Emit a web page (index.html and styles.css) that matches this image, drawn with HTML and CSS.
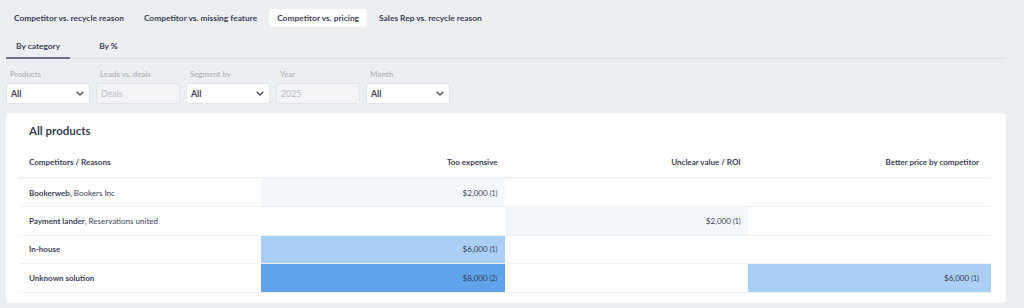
FILE: index.html
```html
<!DOCTYPE html>
<html lang="en">
  <head>
    <meta charset="UTF-8" />
    <meta name="viewport" content="width=device-width, initial-scale=1.0" />
    <title>Lost reasons</title>
    <link rel="stylesheet" href="styles.css">
  </head>
  <body>
    <div class="page">
      <div class="report-tabs">
        <div class="report-tab">Competitor vs. recycle reason</div>
        <div class="report-tab">Competitor vs. missing feature</div>
        <div class="report-tab active">Competitor vs. pricing</div>
        <div class="report-tab">Sales Rep vs. recycle reason</div>
      </div>

      <div class="view-tabs">
        <div class="view-tab active">By category</div>
        <div class="view-tab">By %</div>
      </div>

      <div class="filters">
        <div class="filter">
          <div class="filter-label">Products</div>
          <div class="select">All
            <svg class="chevron" viewBox="0 0 8 5"><polyline points="0.7,0.7 4,4 7.3,0.7" /></svg>
          </div>
        </div>
        <div class="filter">
          <div class="filter-label">Leads vs. deals</div>
          <div class="select disabled">Deals</div>
        </div>
        <div class="filter">
          <div class="filter-label">Segment by</div>
          <div class="select">All
            <svg class="chevron" viewBox="0 0 8 5"><polyline points="0.7,0.7 4,4 7.3,0.7" /></svg>
          </div>
        </div>
        <div class="filter">
          <div class="filter-label">Year</div>
          <div class="select disabled">2025</div>
        </div>
        <div class="filter">
          <div class="filter-label">Month</div>
          <div class="select">All
            <svg class="chevron" viewBox="0 0 8 5"><polyline points="0.7,0.7 4,4 7.3,0.7" /></svg>
          </div>
        </div>
      </div>

      <div class="card">
        <div class="card-title">All products</div>
        <table class="matrix">
          <thead>
            <tr>
              <th class="name">Competitors / Reasons</th>
              <th>Too expensive</th>
              <th>Unclear value / ROI</th>
              <th>Better price by competitor</th>
            </tr>
          </thead>
          <tbody>
            <tr>
              <td class="name"><b>Bookerweb</b>, Bookers Inc</td>
              <td class="heat-1">$2,000 <small>(1)</small></td>
              <td></td>
              <td></td>
            </tr>
            <tr>
              <td class="name"><b>Payment lander</b>, Reservations united</td>
              <td></td>
              <td class="heat-1">$2,000 <small>(1)</small></td>
              <td></td>
            </tr>
            <tr>
              <td class="name"><b>In-house</b></td>
              <td class="heat-2">$6,000 <small>(1)</small></td>
              <td></td>
              <td></td>
            </tr>
            <tr>
              <td class="name"><b>Unknown solution</b></td>
              <td class="heat-3">$8,000 <small>(2)</small></td>
              <td></td>
              <td class="heat-2">$6,000 <small>(1)</small></td>
            </tr>
          </tbody>
        </table>
      </div>
    </div>
  </body>
</html>
```

FILE: styles.css
```css
body {
  margin: 0;
  background: #eceff2;
  font-family: "Lato", "Noto Sans", sans-serif;
  color: #3b3e57;
}

.page {
  width: 1000px;
  margin-left: 6px;
}

/* Report tabs */
.report-tabs {
  display: flex;
  gap: 4px;
  padding-top: 9px;
}

.report-tab {
  height: 18px;
  line-height: 18px;
  padding: 0 8px;
  font-size: 8.4px;
  font-weight: 700;
  border-radius: 4px;
}

.report-tab.active {
  background: #fff;
}

/* View tabs */
.view-tabs {
  display: flex;
  gap: 19px;
  margin-top: 9px;
  border-bottom: 1px solid #dde1e6;
}

.view-tab {
  height: 21px;
  line-height: 21px;
  padding: 0 10px;
  font-size: 8.4px;
  font-weight: 700;
  border-bottom: 2px solid transparent;
  margin-bottom: -1px;
}

.view-tab.active {
  border-bottom-color: #6e7088;
}

/* Filters */
.filters {
  display: flex;
  gap: 6px;
  margin-top: 10px;
}

.filter {
  width: 84px;
}

.filter-label {
  font-size: 7.8px;
  font-weight: 700;
  color: #b5b9c0;
  padding-left: 4px;
  height: 14px;
}

.select {
  position: relative;
  height: 19px;
  line-height: 19px;
  padding-left: 4px;
  background: #fff;
  border: 1px solid #e1e4e9;
  border-radius: 3px;
  font-size: 8.8px;
  font-weight: 700;
}

.select.disabled {
  background: #f3f4f6;
  color: #b9bcc4;
  font-weight: 400;
}

.chevron {
  position: absolute;
  right: 5px;
  top: 7px;
  width: 8px;
  height: 5px;
  fill: none;
  stroke: #4a4d63;
  stroke-width: 1.3;
}

/* Card */
.card {
  margin-top: 9px;
  background: #fff;
  border-radius: 4px;
  padding: 11px 15px 10px 12px;
}

.card-title {
  font-size: 11.5px;
  font-weight: 700;
  padding-left: 11px;
  height: 14px;
  line-height: 14px;
}

.matrix {
  width: 100%;
  margin-top: 9px;
  border-collapse: collapse;
  table-layout: fixed;
  font-size: 8px;
}

.matrix th {
  height: 30px;
  padding: 0 7px;
  text-align: right;
  font-weight: 700;
  border-bottom: 2px solid #eef0f3;
}

.matrix td {
  height: 27.4px;
  padding: 0 7px;
  text-align: right;
  border-bottom: 1px solid #eef0f3;
}

.matrix th:last-child,
.matrix td:last-child {
  padding-right: 12px;
}

.matrix .name {
  text-align: left;
  padding-left: 11px;
}

.matrix td.name b {
  font-weight: 700;
}

.matrix small {
  font-size: 7px;
}

.heat-1 {
  background: #f3f8fd;
}

.heat-2 {
  background: #abcef5;
}

.heat-3 {
  background: #5fa3ea;
}
```
